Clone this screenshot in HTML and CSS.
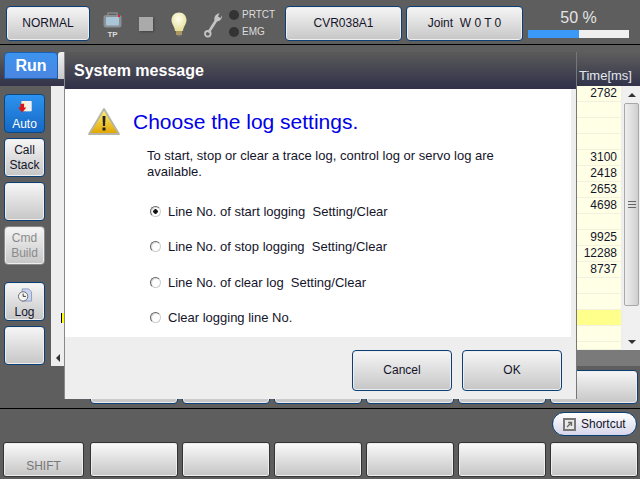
FILE: index.html
```html
<!DOCTYPE html>
<html lang="en">
<head>
<meta charset="utf-8">
<title>System message</title>
<link rel="stylesheet" href="styles.css">
</head>
<body>
<div class="screen">
  <header class="top">
    <button class="btn top-normal">NORMAL</button>
    <div class="tp">
      <svg width="19" height="16" viewBox="0 0 19 16"><path d="M5 3V1h9v2" fill="none" stroke="#888" stroke-width="1.500"/><rect x="0.500" y="3" width="18" height="12.500" rx="2.500" fill="#8a9096"/><rect x="3" y="5" width="13" height="8.500" rx="1" fill="#a9c6d6"/><rect x="15" y="3" width="2" height="2" fill="#d23"/></svg>
      <span class="tp-label">TP</span>
    </div>
    <div class="stop"></div>
    <svg class="bulb" width="16" height="25" viewBox="0 0 16 25"><defs><radialGradient id="bg" cx=".45" cy=".35" r=".7"><stop offset="0" stop-color="#fffff0"/><stop offset="1" stop-color="#e4dc90"/></radialGradient></defs><path d="M8 0.500C3.500 0.500 0.500 4 0.500 8c0 4 3 6 3.500 11h8c.5-5 3.500-7 3.500-11C15.500 4 12.500 0.500 8 0.500z" fill="url(#bg)"/><rect x="5" y="19" width="6" height="4" fill="#a89860"/><rect x="6.500" y="23" width="3" height="1.500" fill="#777"/></svg>
    <svg class="wrench" width="18" height="26" viewBox="0 0 18 26"><path d="M4.500 20.500L13 7" stroke="#c4c4c4" stroke-width="2.600"/><path d="M10.500 8.500C9.500 5.500 11.500 2 15.500 1l-1.500 3.500 2.500 1.500 1.500-2.500c.3 3-2 6-5 6z" fill="#c4c4c4"/><circle cx="3.800" cy="21.800" r="2.800" fill="none" stroke="#c4c4c4" stroke-width="1.800"/></svg>
    <div class="status">
      <div class="status-row"><i class="led"></i><span>PRTCT</span></div>
      <div class="status-row"><i class="led"></i><span>EMG</span></div>
    </div>
    <button class="btn top-cvr">CVR038A1</button>
    <button class="btn top-joint">Joint&nbsp; W 0 T 0</button>
    <div class="load">
      <div class="load-value">50 %</div>
      <div class="load-bar"><div class="load-fill"></div></div>
    </div>
  </header>

  <main class="main">
    <div class="band">
      <div class="tab-run">Run</div>
      <div class="tab-next"></div>
      <div class="band-title">Time[ms]</div>
    </div>
    <div class="work">
      <nav class="side">
        <button class="btn side-btn side-auto">
          <svg width="14" height="13" viewBox="0 0 14 13"><rect x="3" y="0" width="11" height="11" rx="1" fill="#fff4cc"/><rect x="8" y="0" width="6" height="11" fill="#f2f2f2"/><path d="M2 3h4v4h2.500l-4.500 5.500L-0.500 7H2z" fill="#d81818"/></svg>
          <span>Auto</span>
        </button>
        <button class="btn side-btn">Call<br>Stack</button>
        <button class="btn side-btn"></button>
        <button class="btn side-btn side-off">Cmd<br>Build</button>
        <button class="btn side-btn side-log">
          <svg width="16" height="15" viewBox="0 0 16 15"><path d="M5 1h7l3 3v10H5z" fill="#c9d4ee" stroke="#8f9cc4"/><circle cx="6" cy="9" r="5" fill="#f4f4f4" stroke="#666"/><path d="M6 6v3h3" fill="none" stroke="#333"/></svg>
          <span>Log</span>
        </button>
        <button class="btn side-btn"></button>
      </nav>
      <section class="grid">
        <div class="grid-body">
          <div class="rows">
            <div class="row"><i class="gutter"></i><i class="line"></i><span class="time">2782</span></div>
            <div class="row"><i class="gutter"></i><i class="line"></i><span class="time"></span></div>
            <div class="row"><i class="gutter"></i><i class="line"></i><span class="time"></span></div>
            <div class="row"><i class="gutter"></i><i class="line"></i><span class="time"></span></div>
            <div class="row"><i class="gutter"></i><i class="line"></i><span class="time">3100</span></div>
            <div class="row"><i class="gutter"></i><i class="line"></i><span class="time">2418</span></div>
            <div class="row"><i class="gutter"></i><i class="line"></i><span class="time">2653</span></div>
            <div class="row"><i class="gutter"></i><i class="line"></i><span class="time">4698</span></div>
            <div class="row"><i class="gutter"></i><i class="line"></i><span class="time"></span></div>
            <div class="row"><i class="gutter"></i><i class="line"></i><span class="time">9925</span></div>
            <div class="row"><i class="gutter"></i><i class="line"></i><span class="time">12288</span></div>
            <div class="row"><i class="gutter"></i><i class="line"></i><span class="time">8737</span></div>
            <div class="row"><i class="gutter"></i><i class="line"></i><span class="time"></span></div>
            <div class="row"><i class="gutter"></i><i class="line"></i><span class="time"></span></div>
            <div class="row"><i class="gutter"><b class="marker"></b></i><i class="line"></i><span class="time time-hl"></span></div>
            <div class="row"><i class="gutter"></i><i class="line"></i><span class="time"></span></div>
            <div class="row row-cut"><i class="gutter"></i><i class="line"></i><span class="time"></span></div>
          </div>
          <div class="vscroll">
            <div class="v-arrow"><i class="tri-up"></i></div>
            <div class="v-thumb"><i class="grip"></i></div>
            <div class="v-track"></div>
            <div class="v-arrow"><i class="tri-down"></i></div>
          </div>
        </div>
        <div class="hscroll">
          <div class="h-arrow"><i class="tri-left"></i></div>
          <div class="h-rest"></div>
        </div>
      </section>
    </div>
    <div class="softrow">
      <button class="btn soft"></button><button class="btn soft"></button><button class="btn soft"></button><button class="btn soft"></button><button class="btn soft"></button><button class="btn soft"></button>
    </div>
  </main>

  <footer class="foot">
    <div class="shortcut-row">
      <button class="shortcut">
        <svg width="13" height="13" viewBox="0 0 13 13"><rect width="13" height="13" fill="#777"/><rect x="2" y="2" width="9" height="9" fill="#e8e8e8"/><path d="M4 9l4-4M5 4.500h3.500V8" fill="none" stroke="#666" stroke-width="1.300"/></svg>
        <span>Shortcut</span>
      </button>
    </div>
    <div class="frow">
      <button class="fkey fkey-shift">SHIFT</button>
      <button class="fkey"></button><button class="fkey"></button><button class="fkey"></button><button class="fkey"></button><button class="fkey"></button><button class="fkey"></button>
    </div>
  </footer>

  <div class="dialog" role="dialog">
    <div class="dlg-title">System message</div>
    <div class="dlg-body">
      <div class="dlg-head">
        <svg width="32" height="27" viewBox="0 0 32 27"><defs><linearGradient id="wg" x1="0" y1="0" x2="0" y2="1"><stop offset="0" stop-color="#fff27a"/><stop offset="1" stop-color="#e0a400"/></linearGradient></defs><path d="M16 1L31 26H1z" fill="url(#wg)" stroke="#b4b4a8" stroke-width="1.800" stroke-linejoin="round"/><path d="M14.500 8h3l-.5 10h-2z" fill="#222"/><rect x="14.500" y="19.500" width="3" height="3" fill="#222"/></svg>
        <h1 class="dlg-heading">Choose the log settings.</h1>
      </div>
      <p class="dlg-text">To start, stop or clear a trace log, control log or servo log are available.</p>
      <ul class="opts">
        <li class="opt"><i class="radio radio-on"></i>Line No. of start logging&nbsp; Setting/Clear</li>
        <li class="opt"><i class="radio"></i>Line No. of stop logging&nbsp; Setting/Clear</li>
        <li class="opt"><i class="radio"></i>Line No. of clear log&nbsp; Setting/Clear</li>
        <li class="opt"><i class="radio"></i>Clear logging line No.</li>
      </ul>
    </div>
    <div class="dlg-foot">
      <button class="btn dlg-btn">Cancel</button>
      <button class="btn dlg-btn">OK</button>
    </div>
  </div>
</div>
</body>
</html>
```

FILE: styles.css
```css
* { box-sizing: border-box; }
html, body { margin: 0; padding: 0; }
body { background: #5e5e5e; font-family: "Liberation Sans", Arial, sans-serif; overflow: hidden; }
button { font-family: inherit; padding: 0; margin: 0; }
i { display: block; font-style: normal; }

.screen { position: relative; width: 640px; height: 479px; background: #5e5e5e; overflow: hidden; }

.btn {
  display: block;
  border: 1px solid #0b3f76;
  border-radius: 4px;
  background: linear-gradient(#f6f6f6, #c6c6c6);
  box-shadow: inset 0 0 0 1px #eee;
  color: #14142a;
  font-size: 12px;
  line-height: 15px;
}

/* header */
.top { display: flex; align-items: center; height: 45px; padding: 2px 0 0 6px; border-bottom: 1px solid #000; }
.top-normal { width: 84px; height: 35px; flex: none; }
.tp { width: 19px; margin-left: 13px; margin-top: 5px; display: flex; flex-direction: column; align-items: center; flex: none; }
.tp-label { font-size: 8px; line-height: 9px; font-weight: bold; color: #ddd; margin-top: 2px; }
.stop { width: 14px; height: 14px; margin-left: 17px; margin-top: 1px; background: #aaa; box-shadow: 1px 1px 2px #444; flex: none; }
.bulb { margin-left: 18px; margin-top: 3px; flex: none; }
.wrench { margin-left: 17px; margin-top: 3px; flex: none; }
.status { width: 55px; margin-left: 7px; display: flex; flex-direction: column; gap: 5px; flex: none; }
.status-row { display: flex; align-items: center; gap: 3px; color: #ddd; font-size: 10px; line-height: 12px; }
.led { width: 10px; height: 10px; border-radius: 50%; background: #333; }
.top-cvr { width: 117px; height: 35px; margin-left: 1px; flex: none; }
.top-joint { width: 117px; height: 35px; margin-left: 4px; flex: none; }
.load { width: 101px; margin-left: 5px; flex: none; }
.load-value { color: #e4e4e4; font-size: 16px; line-height: 18px; text-align: center; }
.load-bar { height: 8px; margin-top: 3px; background: #efefef; }
.load-fill { width: 51px; height: 8px; background: #3b99f8; }

/* main */
.main { height: 363px; padding-top: 7px; }
.band { display: flex; height: 34px; padding-left: 4px; background: linear-gradient(#5e5e5e, #33334a); }
.tab-run { width: 54px; height: 27px; border: 1px solid #1c5fb0; border-radius: 4px 4px 0 0; background: linear-gradient(#3d93ee, #4a86e0); color: #fff; font-size: 16px; font-weight: bold; line-height: 25px; text-align: center; }
.tab-next { width: 6px; height: 27px; background: linear-gradient(#f0f0f0, #c8c8c8); border-radius: 3px 0 0 0; }
.band-title { margin-left: auto; width: 61px; padding: 15px 0 0; color: #e2e8f0; font-size: 13px; line-height: 18px; }

.work { display: flex; height: 280px; }
.side { width: 51px; padding: 8px 0 0 4px; flex: none; display: flex; flex-direction: column; gap: 5px; }
.side-btn { width: 41px; height: 39px; flex: none; display: flex; flex-direction: column; align-items: center; justify-content: center; text-align: center; }
.side-auto { background: linear-gradient(#2d93f0, #1569c4); border-color: #0a4a80; box-shadow: none; color: #fff; gap: 4px; padding-top: 6px; }
.side-off { border-color: #8a8a8a; color: #8a8a8a; margin-bottom: 12px; }
.side-log { gap: 3px; padding-top: 5px; }

.grid { flex: 1; display: flex; flex-direction: column; }
.grid-body { display: flex; height: 264px; }
.rows { flex: 1; overflow: hidden; background: #eee; }
.row { display: flex; height: 16px; }
.gutter { width: 14px; flex: none; position: relative; }
.line { flex: 1; }
.time { width: 45px; flex: none; background: #ffffe6; border-bottom: 1px solid #f1f1dd; color: #14142a; font-size: 12px; line-height: 15px; text-align: right; padding-right: 4px; margin-right: 2px; }
.time-hl { background: #ffff8c; }
.row-cut { height: 8px; }
.marker { position: absolute; left: 10px; top: 3px; width: 4px; height: 10px; background: #ff0; border-left: 1px solid #000; }

.vscroll { width: 17px; flex: none; display: flex; flex-direction: column; background: #f0f0f0; }
.v-arrow { height: 17px; display: flex; align-items: center; justify-content: center; }
.tri-up { border: 4px solid transparent; border-bottom: 4px solid #333; border-top: 0; }
.tri-down { border: 4px solid transparent; border-top: 4px solid #333; border-bottom: 0; }
.v-thumb { height: 203px; margin: 0 1px; border: 1px solid #a8a8a8; border-radius: 2px; background: linear-gradient(90deg, #efefef, #cfcfcf); display: flex; align-items: center; justify-content: center; }
.grip { width: 8px; height: 7px; border-top: 1px solid #666; border-bottom: 1px solid #666; background: linear-gradient(transparent 2px, #666 2px, #666 3px, transparent 3px); }
.v-track { flex: 1; }

.hscroll { display: flex; height: 16px; }
.h-arrow { width: 14px; background: #eee; display: flex; align-items: center; justify-content: center; }
.tri-left { border: 4px solid transparent; border-right: 4px solid #333; border-left: 0; }
.h-rest { flex: 1; background: #7a7a7a; }

.softrow { display: flex; gap: 4px; padding: 4px 0 0 90px; }
.soft { width: 88px; height: 34px; flex: none; }

/* footer */
.foot { border-top: 1px solid #000; height: 71px; }
.shortcut-row { display: flex; justify-content: flex-end; padding: 3px 3px 0 0; }
.shortcut { width: 85px; height: 24px; display: flex; align-items: center; gap: 5px; padding-left: 10px; border: 1px solid #0b3f76; border-radius: 12px; background: linear-gradient(#fff, #d6d6ea); color: #14142a; font-size: 12px; }
.frow { display: flex; gap: 4px; padding: 6px 0 0 3px; }
.fkey { width: 88px; height: 35px; flex: none; border: 1px solid #333; border-radius: 3px; background: linear-gradient(#fafafa, #c4c4c4); box-shadow: inset 0 0 0 1px #eee; color: #777; font-size: 12px; }
.fkey-shift { width: 81px; margin-right: 2px; padding-top: 12px; }

/* dialog */
.dialog { position: absolute; left: 64px; top: 52px; width: 513px; height: 347px; display: flex; flex-direction: column; border-left: 1px solid #888; border-right: 1px solid #777; background: #eee; }
.dlg-title { height: 37px; background: linear-gradient(#5a5a5a, #30304a); color: #fff; font-size: 16px; font-weight: bold; line-height: 37px; padding-left: 9px; }
.dlg-body { height: 248px; margin-right: 5px; background: #fff; padding: 19px 0 0 23px; }
.dlg-head { display: flex; align-items: center; gap: 13px; }
.dlg-heading { margin: 0; color: #0000e6; font-size: 21px; font-weight: normal; line-height: 27px; }
.dlg-text { width: 375px; margin: 13px 0 0 59px; color: #14142a; font-size: 13px; line-height: 16px; }
.opts { list-style: none; margin: 24px 0 0 62px; padding: 0; display: flex; flex-direction: column; gap: 20.400px; }
.opt { display: flex; align-items: center; gap: 7px; color: #14142a; font-size: 13px; line-height: 15px; }
.radio { width: 11px; height: 11px; border: 1px solid #777; border-color: #666 #ccc #ccc #666; border-radius: 50%; background: #fff; box-shadow: inset 1px 1px 1px #ddd; }
.radio-on { background: radial-gradient(circle, #111 0 2px, #fff 2.500px); }
.dlg-foot { flex: 1; display: flex; gap: 10px; justify-content: flex-end; padding: 13px 14px 0 0; }
.dlg-btn { width: 100px; height: 41px; }
```
